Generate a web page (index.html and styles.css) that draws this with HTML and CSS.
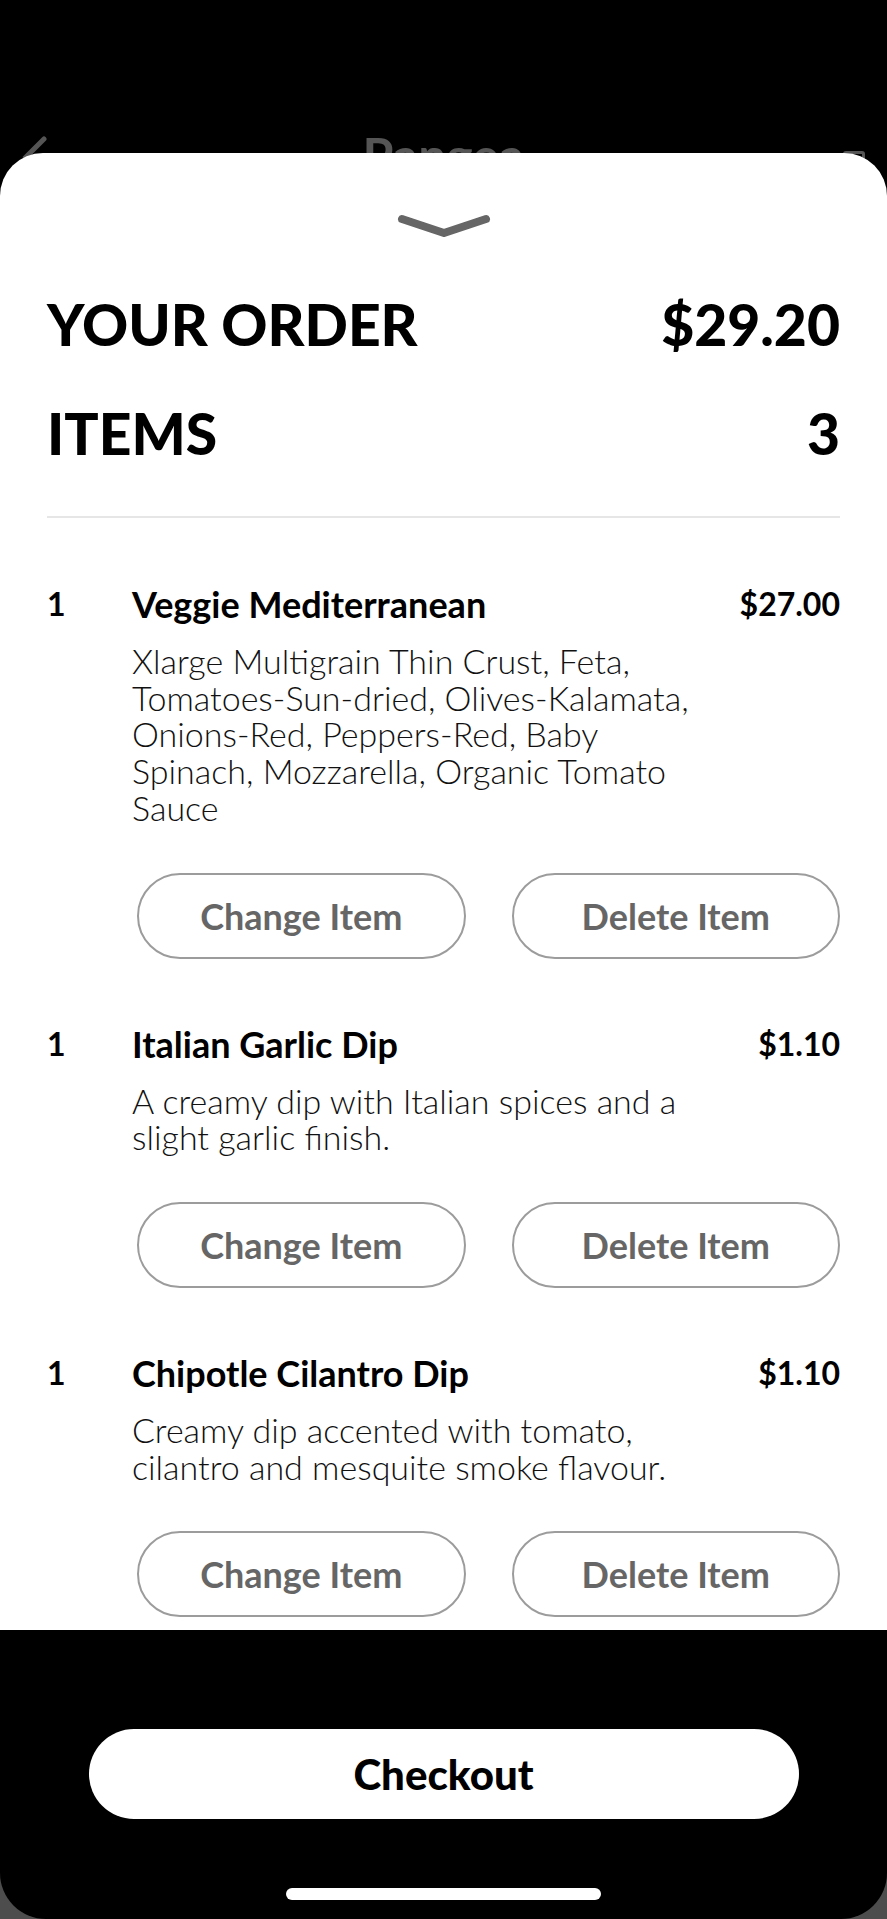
FILE: index.html
```html
<!DOCTYPE html>
<html lang="en">
<head>
    <meta charset="UTF-8">
    <meta name="viewport" content="width=device-width, initial-scale=1.0">
    <title>Your Order</title>
    <link rel="stylesheet" href="styles.css">
</head>
<body>
    <div class="screen">
        <div class="nav">
            <svg class="nav-back" width="30" height="40" viewBox="0 0 30 40">
                <path d="M26 4 L8 22 L26 40" fill="none" stroke="#555" stroke-width="5" stroke-linecap="round"/>
            </svg>
            <div class="nav-title">Pangea</div>
            <div class="nav-icon"></div>
        </div>

        <div class="sheet">
            <div class="handle">
                <svg width="94" height="24" viewBox="0 0 94 24">
                    <path d="M5 5 L47 19 L89 5" fill="none" stroke="#666" stroke-width="8" stroke-linecap="round" stroke-linejoin="round"/>
                </svg>
            </div>

            <div class="summary">
                <div class="summary-row">
                    <span>YOUR ORDER</span>
                    <span>$29.20</span>
                </div>
                <div class="summary-row">
                    <span>ITEMS</span>
                    <span>3</span>
                </div>
            </div>

            <div class="items">
                <div class="item">
                    <div class="item-qty">1</div>
                    <div class="item-name">Veggie Mediterranean</div>
                    <div class="item-price">$27.00</div>
                    <p class="item-desc">Xlarge Multigrain Thin Crust, Feta, Tomatoes-Sun-dried, Olives-Kalamata, Onions-Red, Peppers-Red, Baby Spinach, Mozzarella, Organic Tomato Sauce</p>
                    <div class="item-actions">
                        <button class="btn-outline">Change Item</button>
                        <button class="btn-outline">Delete Item</button>
                    </div>
                </div>

                <div class="item">
                    <div class="item-qty">1</div>
                    <div class="item-name">Italian Garlic Dip</div>
                    <div class="item-price">$1.10</div>
                    <p class="item-desc">A creamy dip with Italian spices and a slight garlic finish.</p>
                    <div class="item-actions">
                        <button class="btn-outline">Change Item</button>
                        <button class="btn-outline">Delete Item</button>
                    </div>
                </div>

                <div class="item">
                    <div class="item-qty">1</div>
                    <div class="item-name">Chipotle Cilantro Dip</div>
                    <div class="item-price">$1.10</div>
                    <p class="item-desc">Creamy dip accented with tomato, cilantro and mesquite smoke flavour.</p>
                    <div class="item-actions">
                        <button class="btn-outline">Change Item</button>
                        <button class="btn-outline">Delete Item</button>
                    </div>
                </div>
            </div>
        </div>

        <div class="footer">
            <button class="btn-checkout">Checkout</button>
            <div class="home-bar"></div>
        </div>
    </div>
</body>
</html>
```

FILE: styles.css
```css
html, body {
    margin: 0;
    padding: 0;
}
body {
    background: #4d4d4d;
    font-family: Lato, "Open Sans", sans-serif;
    width: 887px;
    height: 1919px;
    overflow: hidden;
}
.screen {
    background: #000;
    height: 1919px;
    border-radius: 0 0 46px 46px;
    overflow: hidden;
}
.nav {
    height: 153px;
    display: grid;
    grid-template-columns: 1fr auto 1fr;
    align-items: end;
    padding: 0 18px;
    box-sizing: border-box;
}
.nav-back {
    margin-bottom: -22px;
}
.nav-title {
    color: #555;
    font-weight: 700;
    font-size: 50px;
    line-height: 50px;
    margin-bottom: -27px;
}
.nav-icon {
    justify-self: end;
    width: 16px;
    height: 16px;
    border: 3px solid #555;
    border-radius: 3px;
    margin-bottom: -20px;
    margin-right: 4px;
}
.sheet {
    position: relative;
    background: #fff;
    border-radius: 43px 43px 0 0;
    height: 1477px;
    overflow: hidden;
    padding: 0 47px;
    box-sizing: border-box;
}
.handle {
    display: flex;
    justify-content: center;
    padding-top: 61px;
}
.handle svg {
    display: block;
}
.summary {
    padding-top: 32px;
    padding-bottom: 28px;
    border-bottom: 2px solid #e6e6e6;
}
.summary-row {
    display: flex;
    justify-content: space-between;
    font-weight: 900;
    font-size: 57px;
    line-height: 109px;
    color: #000;
}
.item {
    display: grid;
    grid-template-columns: 85px 1fr auto;
    padding-top: 65px;
}
.item:first-child {
    padding-top: 66px;
}
.item-qty,
.item-name,
.item-price {
    font-weight: 700;
    font-size: 36px;
    line-height: 40px;
    color: #000;
}
.item-qty,
.item-price {
    font-size: 32px;
}
.item-price {
    text-align: right;
}
.item-desc {
    grid-column: 2 / 3;
    margin: 19px 0 0;
    max-width: 565px;
    font-weight: 300;
    font-size: 34px;
    line-height: 36.7px;
    color: #111;
}
.item-actions {
    grid-column: 2 / 4;
    display: flex;
    gap: 46px;
    padding-left: 5px;
    margin-top: 46px;
}
.btn-outline {
    flex: 1;
    height: 86px;
    background: #fff;
    border: 2px solid #9c9c9c;
    border-radius: 43px;
    font-family: Lato, "Open Sans", sans-serif;
    font-weight: 700;
    font-size: 36px;
    color: #666;
}
.footer {
    display: flex;
    flex-direction: column;
    align-items: center;
    padding-top: 99px;
}
.btn-checkout {
    width: 710px;
    height: 90px;
    background: #fff;
    border: none;
    border-radius: 45px;
    font-family: Lato, "Open Sans", sans-serif;
    font-weight: 900;
    font-size: 42px;
    color: #000;
}
.home-bar {
    width: 315px;
    height: 12px;
    background: #fff;
    border-radius: 6px;
    margin-top: 69px;
}
```
